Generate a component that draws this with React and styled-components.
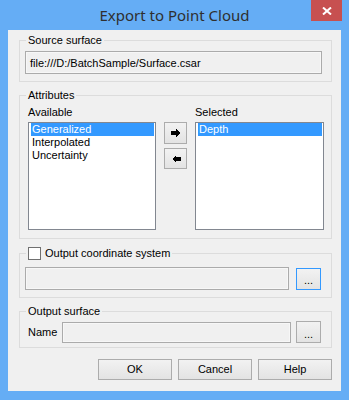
import React from 'react'
import styled, { createGlobalStyle } from 'styled-components'

const GlobalStyle = createGlobalStyle`
    html, body {
        margin: 0;
        padding: 0;
        background: #65adf5;
    }
    * {
        box-sizing: border-box;
    }
`

const Window = styled.div`
    width: 349px;
    height: 400px;
    background: #65adf5;
    font-family: "Liberation Sans", Arial, sans-serif;
    font-size: 11px;
    color: #000;
`

const TitleBar = styled.div`
    height: 30px;
    display: grid;
    grid-template-columns: 1fr auto 1fr;
    align-items: start;
`

const Title = styled.div`
    grid-column: 2;
    line-height: 30px;
    font-family: "Noto Sans", "Open Sans", sans-serif;
    font-size: 15px;
    color: #2f2f2f;
    white-space: nowrap;
`

const CloseButton = styled.div`
    grid-column: 3;
    justify-self: end;
    margin-right: 7px;
    width: 31px;
    height: 21px;
    background: #c75050;
    display: flex;
    align-items: center;
    justify-content: center;
`

const Client = styled.div`
    margin: 0 8px;
    height: 361px;
    background: #f0f0f0;
    padding: 3px 9px 0 11px;
    display: flex;
    flex-direction: column;
`

const Group = styled.fieldset`
    margin: ${(p) => p.$top || 0}px 0 0 0;
    min-width: 0;
    border: 1px solid #dcdcdc;
    padding: ${(p) => p.$pad};
`

const Legend = styled.legend`
    margin-left: ${(p) => p.$shift || 0}px;
    padding: 0 2px;
    line-height: 14px;
    height: 14px;
`

const Field = styled.div`
    height: ${(p) => p.$h || 23}px;
    flex: 1;
    border: 1px solid #ababab;
    box-shadow: inset 0 0 0 1px #f7f7f7;
    background: #f0f0f0;
    padding: 0 4px;
    display: flex;
    align-items: center;
    white-space: nowrap;
`

const AttrGrid = styled.div`
    display: grid;
    grid-template-columns: 128px 23px 129px;
    grid-template-rows: 13px 108px;
    column-gap: 8px;
    row-gap: 3px;
`

const ColLabel = styled.div`
    line-height: 13px;
    grid-column: ${(p) => p.$col};
`

const ListBox = styled.div`
    grid-column: ${(p) => p.$col};
    grid-row: 2;
    border: 1px solid #828790;
    background: #fff;
    padding: 0 1px 0 2px;
    display: flex;
    flex-direction: column;
`

const ListItem = styled.div`
    height: 13px;
    line-height: 13px;
    padding-left: 1px;
    background: ${(p) => (p.$selected ? '#3399ff' : 'transparent')};
    color: ${(p) => (p.$selected ? '#fff' : '#000')};
    &:first-child {
        margin-top: 0;
    }
`

const MoveButtons = styled.div`
    grid-column: 2;
    grid-row: 2;
    display: flex;
    flex-direction: column;
    gap: 4px;
`

const Button = styled.div`
    width: ${(p) => p.$w}px;
    height: ${(p) => p.$h}px;
    border: 1px solid ${(p) => (p.$focused ? '#3399ff' : '#acacac')};
    background: linear-gradient(#f2f2f2, #e3e3e3);
    display: flex;
    align-items: center;
    justify-content: center;
    flex-shrink: 0;
    line-height: 13px;
`

const Dots = styled.span`
    padding-top: 4px;
`

const Row = styled.div`
    display: flex;
    align-items: center;
    gap: ${(p) => p.$gap}px;
`

const RowLabel = styled.div`
    width: 29px;
`

const CheckLabel = styled.span`
    display: inline-flex;
    align-items: center;
    gap: 4px;
    height: 14px;
`

const CheckBox = styled.span`
    width: 13px;
    height: 13px;
    border: 1px solid #707070;
    background: #fff;
`

const Footer = styled.div`
    margin-top: 11px;
    display: flex;
    justify-content: flex-end;
    gap: 6px;
`

const RightArrow = () => (
    <svg width="10" height="8" viewBox="0 0 10 8" shapeRendering="crispEdges">
        <polygon points="0,2 5,2 5,0 9,4 5,8 5,6 0,6" fill="#000" />
    </svg>
)

const LeftArrow = () => (
    <svg width="10" height="8" viewBox="0 0 10 8" shapeRendering="crispEdges">
        <polygon points="10,2 5,2 5,0 1,4 5,8 5,6 10,6" fill="#000" />
    </svg>
)

const CloseIcon = () => (
    <svg width="10" height="8" viewBox="0 0 10 8">
        <path d="M1 0.5 L9 7.5 M9 0.5 L1 7.5" stroke="#fff" strokeWidth="2" />
    </svg>
)

export default function App() {
    return (
        <React.Fragment>
            <GlobalStyle />
            <Window>
                <TitleBar>
                    <Title>Export to Point Cloud</Title>
                    <CloseButton>
                        <CloseIcon />
                    </CloseButton>
                </TitleBar>
                <Client>
                    <Group $pad="4px 9px 7px 5px">
                        <Legend $shift={1}>Source surface</Legend>
                        <Row>
                            <Field>file:///D:/BatchSample/Surface.csar</Field>
                        </Row>
                    </Group>

                    <Group $top={6} $pad="4px 7px 8px 8px">
                        <Legend $shift={-2}>Attributes</Legend>
                        <AttrGrid>
                            <ColLabel $col={1}>Available</ColLabel>
                            <ColLabel $col={3}>Selected</ColLabel>
                            <ListBox $col={1}>
                                <ListItem $selected>Generalized</ListItem>
                                <ListItem>Interpolated</ListItem>
                                <ListItem>Uncertainty</ListItem>
                            </ListBox>
                            <MoveButtons>
                                <Button $w={23} $h={22}>
                                    <RightArrow />
                                </Button>
                                <Button $w={23} $h={21}>
                                    <LeftArrow />
                                </Button>
                            </MoveButtons>
                            <ListBox $col={3}>
                                <ListItem $selected>Depth</ListItem>
                            </ListBox>
                        </AttrGrid>
                    </Group>

                    <Group $top={7} $pad="7px 10px 7px 5px">
                        <Legend $shift={1}>
                            <CheckLabel>
                                <CheckBox />
                                Output coordinate system
                            </CheckLabel>
                        </Legend>
                        <Row $gap={7}>
                            <Field />
                            <Button $w={25} $h={22} $focused>
                                <Dots>...</Dots>
                            </Button>
                        </Row>
                    </Group>

                    <Group $top={6} $pad="3px 10px 4px 8px">
                        <Legend $shift={-2}>Output surface</Legend>
                        <Row $gap={5}>
                            <RowLabel>Name</RowLabel>
                            <Field $h={21} />
                            <Button $w={25} $h={22}>
                                <Dots>...</Dots>
                            </Button>
                        </Row>
                    </Group>

                    <Footer>
                        <Button $w={74} $h={21}>OK</Button>
                        <Button $w={74} $h={21}>Cancel</Button>
                        <Button $w={74} $h={21}>Help</Button>
                    </Footer>
                </Client>
            </Window>
        </React.Fragment>
    )
}
